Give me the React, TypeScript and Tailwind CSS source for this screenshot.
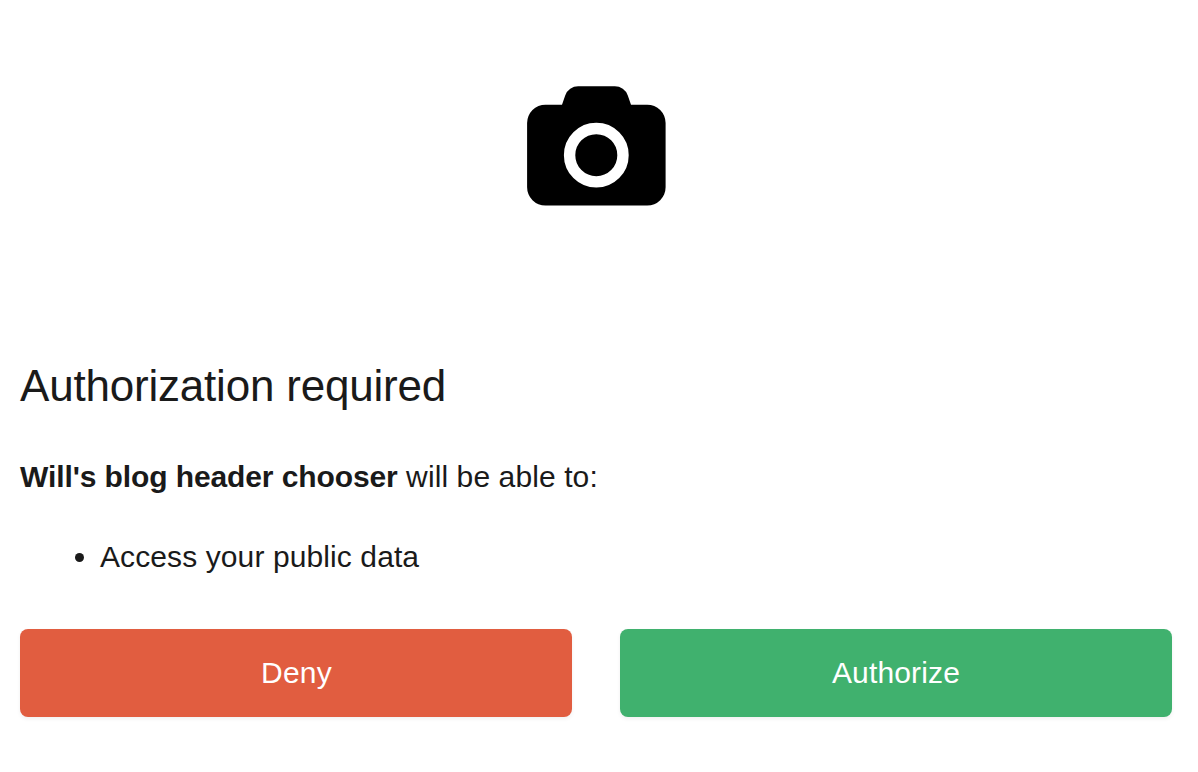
export default function App() {
  return (
    <main className="h-[772px] w-full overflow-hidden bg-white pl-5 pr-[26px] pt-[86px] font-['Liberation_Sans',Arial,sans-serif] text-[30px] leading-10 tracking-[0.1px] text-[#1a1a1a]">
      <svg className="ml-[507px] block h-[120px] w-[139px]" viewBox="0 0 139 120" aria-hidden="true">
        <path d="M18.5 18.7H35L38.2 9.4A13.8 13.8 0 0 1 51.2 0.3H87.8A13.8 13.8 0 0 1 100.8 9.4L104 18.7H120.2A18.4 18.4 0 0 1 138.6 37.1V101.2A18.4 18.4 0 0 1 120.2 119.6H18.5A18.4 18.4 0 0 1 0.1 101.2V37.1A18.4 18.4 0 0 1 18.5 18.7Z" fill="#000" />
        <circle cx="69.3" cy="69.2" r="26.7" fill="#000" stroke="#fff" strokeWidth="11.4" />
      </svg>
      <h1 className="mt-[150px] text-[44px] leading-[60px] tracking-[-0.2px]">Authorization required</h1>
      <p className="mt-[41px]"><strong className="tracking-[-0.1px]">Will's blog header chooser</strong> will be able to:</p>
      <ul className="mt-10 list-disc pl-20">
        <li>Access your public data</li>
      </ul>
      <div className="mt-[52px] grid grid-cols-2 gap-12">
        <button className="h-[88px] rounded-lg bg-[#e15d40] pl-px tracking-[0.2px] text-white shadow-[0_2px_4px_rgba(0,0,0,0.06)]">Deny</button>
        <button className="h-[88px] rounded-lg bg-[#40b16e] tracking-[0.15px] text-white shadow-[0_2px_4px_rgba(0,0,0,0.06)]">Authorize</button>
      </div>
    </main>
  );
}
